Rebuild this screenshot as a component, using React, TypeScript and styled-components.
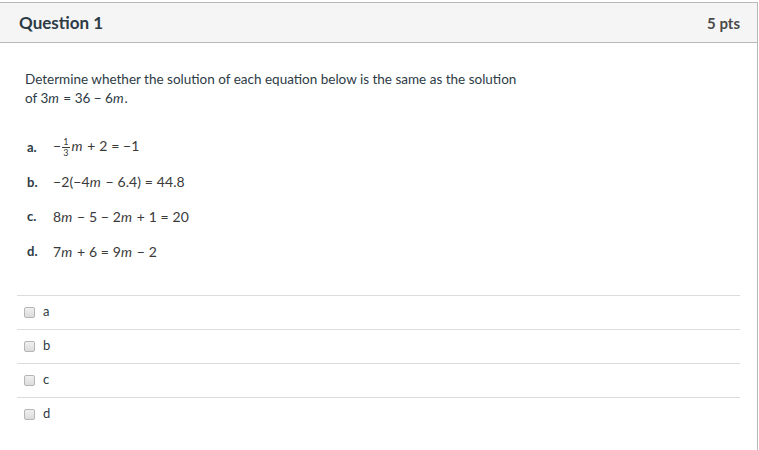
import React from 'react';
import styled, { createGlobalStyle } from 'styled-components';

const GlobalStyle = createGlobalStyle`
  html, body {
    margin: 0;
    padding: 0;
    background: #ffffff;
    font-family: Lato, 'Open Sans', sans-serif;
    color: #2d3b45;
  }
`;

const Panel = styled.div`
  margin: 2px 0 0 -1px;
  width: 759px;
  height: 448px;
  box-sizing: border-box;
  border: 1px solid #b8b8b8;
  border-bottom: none;
  background: #fff;
`;

const Header = styled.div`
  display: flex;
  align-items: center;
  justify-content: space-between;
  height: 39px;
  padding: 0 17px 0 19px;
  background: #f5f5f5;
  border-bottom: 1px solid #b8b8b8;
`;

const Title = styled.div`
  font-size: 17px;
  font-weight: 700;
  color: #2d3b45;
`;

const Points = styled.div`
  font-size: 15px;
  font-weight: 700;
  color: #4a4a4a;
`;

const Body = styled.div`
  padding: 27px 17px 0 17px;
`;

const Prompt = styled.p`
  margin: 0 0 0 8px;
  font-size: 13.5px;
  line-height: 19px;
  width: 500px;
`;

const Parts = styled.ol`
  list-style: none;
  margin: 22px 0 0 10px;
  padding: 0;
`;

const Part = styled.li`
  display: flex;
  align-items: center;
  height: 34.6px;
`;

const PartLabel = styled.span`
  width: 26px;
  font-weight: 700;
  font-size: 13px;
`;

const Eq = styled.span`
  color: #3a3a3a;
  font-family: Lato, sans-serif;
  font-size: 14px;
  letter-spacing: 0.1px;
  white-space: pre;
`;

// italic variable; a hair of padding keeps the slanted glyph clear of the next character
const Var = styled.i`
  font-style: italic;
  padding-right: 1px;
`;

const Frac = styled.span`
  display: inline-flex;
  flex-direction: column;
  align-items: center;
  vertical-align: middle;
  font-size: 9px;
  line-height: 8px;
  margin: 0 2px 0 1px;
`;

const FracTop = styled.span`
  border-bottom: 1px solid #3a3a3a;
  padding: 0 1px 1px;
`;

const FracBottom = styled.span`
  padding-top: 1px;
`;

const Answers = styled.div`
  margin-top: 27px;
`;

const Answer = styled.label`
  display: flex;
  align-items: center;
  height: 33px;
  border-top: 1px solid #dcdcdc;
  padding-left: 7px;
  font-size: 13px;
  color: #2d3b45;
`;

const Check = styled.input.attrs({ type: 'checkbox' })`
  appearance: none;
  width: 11px;
  height: 11px;
  margin: -1px 8px 0 0;
  border: 1px solid #b5b5b5;
  border-radius: 2px;
  background: linear-gradient(#f0f0f0, #dcdcdc);
  box-sizing: border-box;
`;

const AnswerText = styled.span`
  margin-top: -3px;
`;

const M = '\u2212';

export default function App() {
  return (
    <>
      <GlobalStyle />
      <Panel>
        <Header>
          <Title>Question 1</Title>
          <Points>5 pts</Points>
        </Header>
        <Body>
          <Prompt>
            {'Determine whether the solution of each equation below is the same as the solution of 3'}
            <Var>m</Var>
            {` = 36 ${M} 6`}
            <Var>m</Var>.
          </Prompt>
          <Parts>
            <Part>
              <PartLabel>a.</PartLabel>
              <Eq>
                {M}
                <Frac>
                  <FracTop>1</FracTop>
                  <FracBottom>3</FracBottom>
                </Frac>
                <Var>m</Var>
                {` + 2 = ${M}1`}
              </Eq>
            </Part>
            <Part>
              <PartLabel>b.</PartLabel>
              <Eq>
                {`${M}2(${M}4`}
                <Var>m</Var>
                {` ${M} 6.4) = 44.8`}
              </Eq>
            </Part>
            <Part>
              <PartLabel>c.</PartLabel>
              <Eq>
                {'8'}
                <Var>m</Var>
                {` ${M} 5 ${M} 2`}
                <Var>m</Var>
                {' + 1 = 20'}
              </Eq>
            </Part>
            <Part>
              <PartLabel>d.</PartLabel>
              <Eq>
                {'7'}
                <Var>m</Var>
                {' + 6 = 9'}
                <Var>m</Var>
                {` ${M} 2`}
              </Eq>
            </Part>
          </Parts>
          <Answers>
            {['a', 'b', 'c', 'd'].map((a) => (
              <Answer key={a}>
                <Check />
                <AnswerText>{a}</AnswerText>
              </Answer>
            ))}
          </Answers>
        </Body>
      </Panel>
    </>
  );
}
